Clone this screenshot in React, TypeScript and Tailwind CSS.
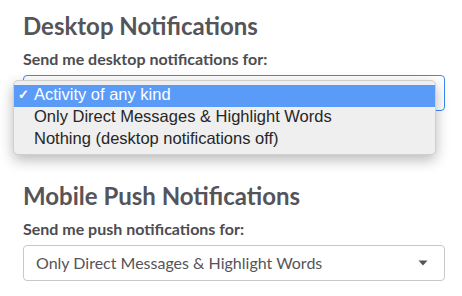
const options = [
  "Activity of any kind",
  "Only Direct Messages & Highlight Words",
  "Nothing (desktop notifications off)",
];

function Caret() {
  return (
    <svg width="10" height="6" viewBox="0 0 10 6" className="shrink-0">
      <path d="M0.5 0.5 H9.5 L5 5.5 Z" fill="#555459" />
    </svg>
  );
}

export default function App() {
  return (
    <div className="relative h-[296px] w-[462px] overflow-hidden bg-white font-['Lato',sans-serif]">
      <div className="px-[23px] pt-[12px]">
        <h2 className="text-[24px] font-bold leading-[28px] text-[#555459]">
          Desktop Notifications
        </h2>
        <p className="mt-[9px] text-[16px] font-bold leading-[20px] text-[#4d4c51]">
          Send me desktop notifications for:
        </p>
        <div className="relative mt-[6px]">
          <div className="h-[36px] w-[422px] rounded-[4px] border border-[#3d8af7] bg-white" />

          {/* native select popup, open */}
          <div className="absolute left-[-10px] top-[5px] w-[423px] rounded-[5px] border border-[#cfcfcf] bg-[#efefef] pt-[4px] pb-[3px] font-['Liberation_Sans',Arial,sans-serif] text-[16.5px] shadow-[0_5px_14px_rgba(0,0,0,0.28)]">
            {options.map((o, i) => (
              <div
                key={o}
                className={
                  i === 0
                    ? "flex h-[22px] items-start bg-[#5b9bf8] leading-[19px] text-white"
                    : "flex h-[22px] items-start leading-[19px] text-[#262626]"
                }
              >
                <span className="w-[20px] pl-[4px] text-[13px] font-bold">{i === 0 ? "✓" : ""}</span>
                <span>{o}</span>
              </div>
            ))}
          </div>
        </div>

        <h2 className="mt-[71px] text-[24px] font-bold leading-[28px] text-[#555459]">
          Mobile Push Notifications
        </h2>
        <p className="mt-[9px] text-[16px] font-bold leading-[20px] text-[#4d4c51]">
          Send me push notifications for:
        </p>
        <div className="mt-[6px] flex h-[36px] w-[422px] items-center justify-between rounded-[4px] border border-[#c8c8c8] bg-white pl-[12px] pr-[16px]">
          <span className="text-[16px] text-[#555459]">Only Direct Messages &amp; Highlight Words</span>
          <Caret />
        </div>
      </div>
    </div>
  );
}
